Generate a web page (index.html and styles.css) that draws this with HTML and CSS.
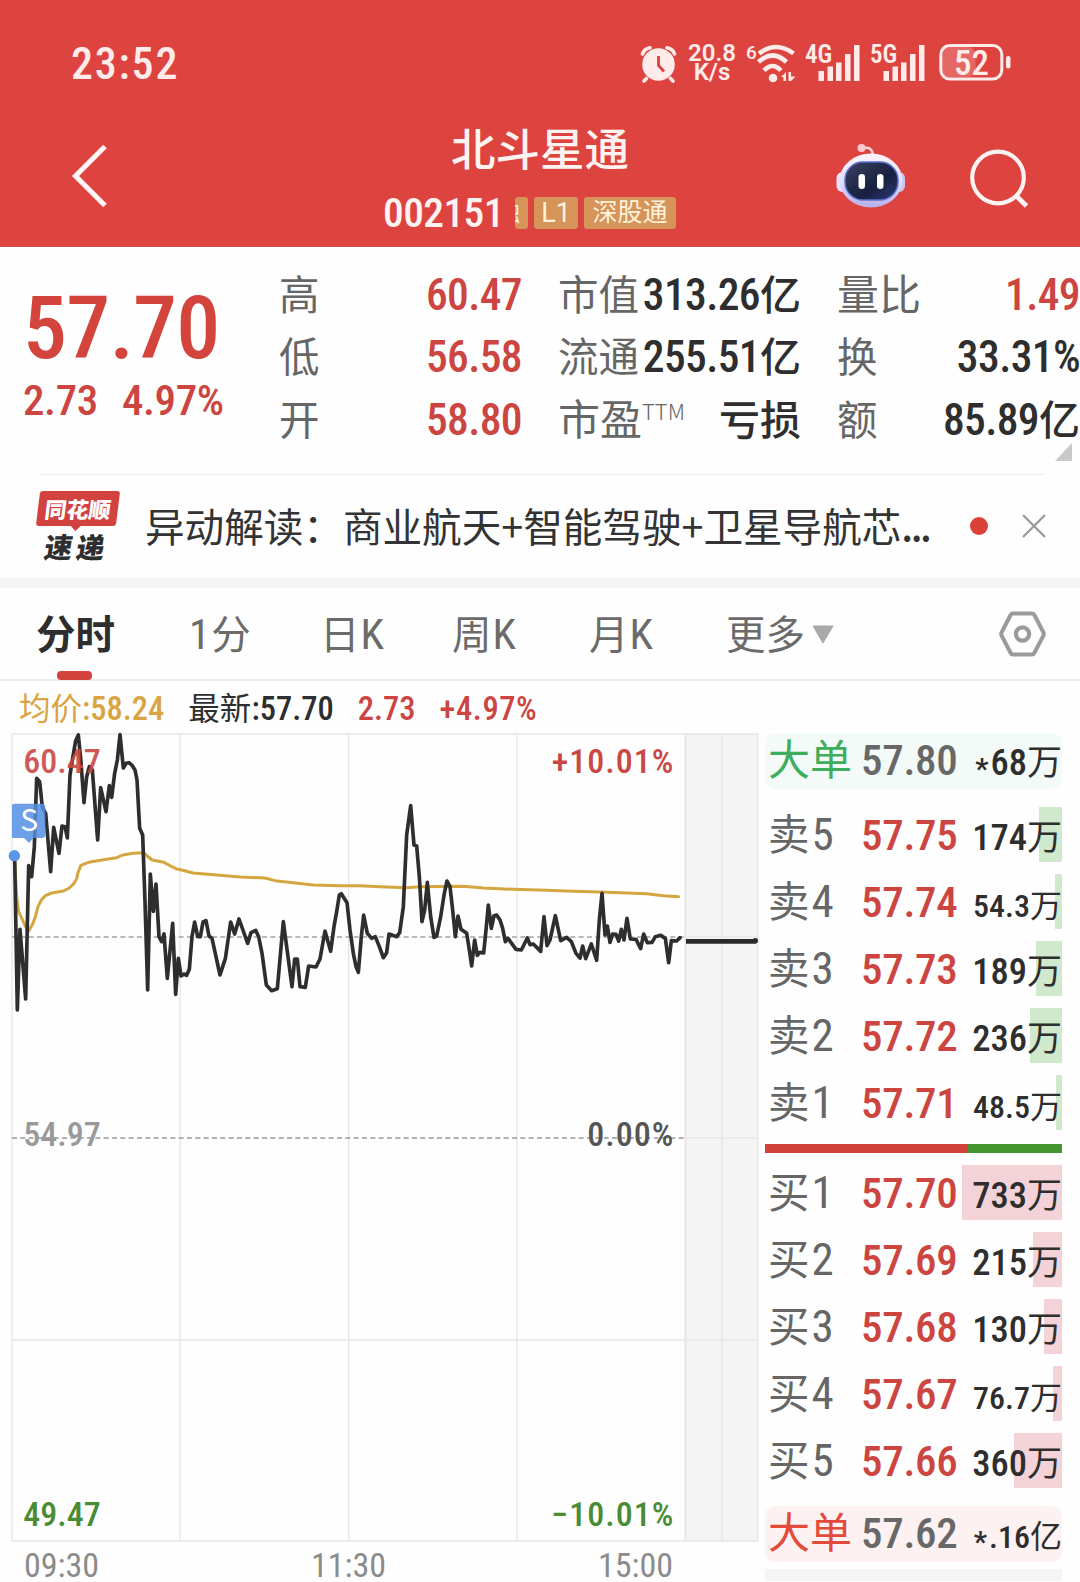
FILE: index.html
```html
<!DOCTYPE html>
<html lang="zh-CN">
<head>
<meta charset="utf-8">
<title>北斗星通 002151</title>
<link rel="stylesheet" href="styles.css">
</head>
<body>
<header class="header">
  <div class="status">
    <span class="clock">23:52</span>
    <div class="status-icons">
      <svg class="ic-alarm" width="37" height="38" viewBox="0 0 37 38"><g fill="none" stroke="#ffecea" stroke-width="3.6" stroke-linecap="round"><path d="M2.5 9Q4 4 10 2.8M34.500 9Q33 4 27 2.800M6.500 33.500L4 36M30.500 33.500L33 36"/></g><circle cx="18.500" cy="19.500" r="16.300" fill="#ffecea"/><path d="M18.500 11v9.500l5.500 6" fill="none" stroke="#dd433f" stroke-width="2.800"/></svg>
      <span class="speed"><span>20.8</span><span>K/s</span></span>
      <svg class="ic-wifi" width="50" height="40" viewBox="0 0 50 40"><g fill="none" stroke="#ffecea" stroke-width="4.600"><path d="M13 9.500Q30 -3.500 47.500 9.500"/><path d="M12.500 18Q26.500 5 40.500 18"/><path d="M18 26.500Q26.500 17.500 35 26.500"/></g><circle cx="27" cy="34" r="4.300" fill="#ffecea"/><path d="M35 33l5-5v9h-2.600v-4zM42.500 28v9h2.500l4.500-4.500h-4.400V28z" fill="#ffecea"/><text x="0" y="15" class="tiny">6</text></svg>
      <svg class="ic-sig" width="56" height="40" viewBox="0 0 56 40"><text x="0" y="18.500" class="net">4G</text><path d="M13.500 27h5.500v10h-5.500zM22.500 22.500h5.500v14.500h-5.500zM31 18.500h5.500v18.500h-5.500zM40 10h5.500v27h-5.500zM49 1h5.500v36h-5.500z" fill="#ffecea"/></svg>
      <svg class="ic-sig" width="56" height="40" viewBox="0 0 56 40"><text x="0" y="18.500" class="net">5G</text><path d="M13.500 27h5.500v10h-5.500zM22.500 22.500h5.500v14.500h-5.500zM31 18.500h5.500v18.500h-5.500zM40 10h5.500v27h-5.500zM49 1h5.500v36h-5.500z" fill="#ffecea"/></svg>
      <svg width="74" height="38" viewBox="0 0 74 38"><rect x="2.500" y="3" width="34" height="30" rx="8" fill="#e46965"/><rect x="1.800" y="1.500" width="61" height="33.500" rx="9" fill="none" stroke="#ffecea" stroke-width="3"/><rect x="67" y="12" width="4.500" height="12.500" rx="2.200" fill="#ffecea"/><text x="15" y="30.500" class="batt">52</text></svg>
    </div>
  </div>
  <div class="titlebar">
    <svg class="back" width="40" height="64" viewBox="0 0 40 64"><path d="M34 2.500L4.500 32L34 61.500" fill="none" stroke="#fff6f4" stroke-width="5"/></svg>
    <div class="name">
      <h1>北斗星通</h1>
      <div class="code"><span class="code-num">002151</span><span class="tag tag-cut"><i>融</i></span><span class="tag tag-l1">L1</span><span class="tag">深股通</span></div>
    </div>
    <div class="actions">
      <svg width="70" height="66" viewBox="0 0 70 66">
        <defs><linearGradient id="shell" x1="0" y1="0" x2="0" y2="1"><stop offset="0" stop-color="#fff5fa"/><stop offset=".55" stop-color="#dcdcfa"/><stop offset="1" stop-color="#b9aeea"/></linearGradient><linearGradient id="face" x1="0" y1="0" x2="1" y2="1"><stop offset="0" stop-color="#3a4163"/><stop offset=".6" stop-color="#18203f"/><stop offset="1" stop-color="#2a3a78"/></linearGradient></defs>
        <path d="M27 5Q36 3 37 12" fill="none" stroke="#fbd3dc" stroke-width="2.500"/><circle cx="25.500" cy="5" r="4" fill="#fbc9d0"/>
        <rect x="0.500" y="29" width="12" height="20" rx="6" fill="#e9e2fb"/><rect x="57" y="29" width="12" height="20" rx="6" fill="#c9c2f2"/>
        <ellipse cx="35" cy="37.500" rx="31.500" ry="27" fill="url(#shell)"/>
        <rect x="9" y="19" width="53" height="38" rx="18" fill="url(#face)" stroke="#5c6fd0" stroke-width="1.500"/>
        <rect x="22.500" y="31" width="6.500" height="15" rx="3.200" fill="#fff"/><rect x="41" y="31" width="6.500" height="15" rx="3.200" fill="#fff"/>
      </svg>
      <svg width="60" height="60" viewBox="0 0 60 60"><g fill="none" stroke="#fff3f1"><circle cx="28" cy="28.500" r="25.800" stroke-width="4.200"/><path d="M46.500 47L56.500 57" stroke-width="4.800"/></g></svg>
    </div>
  </div>
</header>

<section class="quote">
  <div class="price">
    <div class="last">57.70</div>
    <div class="delta"><span>2.73</span><span>4.97%</span></div>
  </div>
  <dl class="stats">
    <div class="col">
      <div><dt>高</dt><dd class="up">60.47</dd></div>
      <div><dt>低</dt><dd class="up">56.58</dd></div>
      <div><dt>开</dt><dd class="up">58.80</dd></div>
    </div>
    <div class="col">
      <div><dt>市值</dt><dd>313.26<b>亿</b></dd></div>
      <div><dt>流通</dt><dd>255.51<b>亿</b></dd></div>
      <div><dt class="pe">市盈<sup>TTM</sup></dt><dd><b>亏损</b></dd></div>
    </div>
    <div class="col">
      <div><dt class="pe">量比</dt><dd class="up">1.49</dd></div>
      <div><dt>换</dt><dd>33.31%</dd></div>
      <div><dt>额</dt><dd>85.89<b>亿</b></dd></div>
    </div>
  </dl>
  <i class="corner"></i>
</section>

<section class="news">
  <div class="logo"><span class="logo-top">同花顺</span><span class="logo-bottom">速递</span></div>
  <p>异动解读：商业航天+智能驾驶+卫星导航芯<span class="dots">...</span></p>
  <i class="dot"></i>
  <svg width="24" height="24" viewBox="0 0 24 24"><path d="M1 1L23 23M23 1L1 23" stroke="#9d9d9d" stroke-width="2.400"/></svg>
</section>

<nav class="tabs">
  <span class="on">分时</span>
  <span><i>1</i>分</span>
  <span>日<i>K</i></span>
  <span>周<i>K</i></span>
  <span>月<i>K</i></span>
  <span class="more">更多<svg width="22" height="19" viewBox="0 0 22 19"><path d="M1 1h20L11 18z" fill="#a9a9a9" stroke="#a9a9a9" stroke-width="1" stroke-linejoin="round"/></svg></span>
  <svg class="hex" width="47" height="46" viewBox="0 0 47 46"><path d="M14 2.500H33Q34.500 2.500 35.300 3.800L44.500 21.500Q45 23 44.500 24.500L35.300 42Q34.500 43.500 33 43.500H14Q12.500 43.500 11.700 42L2.500 24.500Q2 23 2.500 21.500L11.700 3.800Q12.500 2.500 14 2.500Z" fill="none" stroke="#9b9b9b" stroke-width="4"/><circle cx="23.500" cy="23" r="6.600" fill="none" stroke="#9b9b9b" stroke-width="4.200"/></svg>
</nav>

<div class="legend"><span class="avg"><b>均价</b>:58.24</span><span class="now"><b>最新</b>:57.70</span><span class="up">2.73</span><span class="up">+4.97%</span></div>

<main class="board">
  <div class="chart">
    <svg class="plot" width="760" height="809" viewBox="0 39 2280 2427">
      <rect x="2058" y="42" width="216" height="2421" fill="#f4f4f4"/>
      <g fill="none" stroke="#e6e6e6" stroke-width="4">
        <path d="M36 2463V42H2274V2463Z"/>
        <path d="M540 42V2463M1046 42V2463M1551 42V2463M2166 42V2463M36 1860H2274M2058 651H2274M2058 1254H2274"/>
        <path d="M2056 42V2463" stroke-width="6"/>
      </g>
      <text x="2023" y="160" class="lbl red pct" text-anchor="end">+10.01%</text>
      <g fill="none" stroke-dasharray="15 10">
        <path d="M36 651H2056" stroke="#a3a59b" stroke-width="4"/>
        <path d="M36 1254H2056" stroke="#999" stroke-width="4"/>
      </g>
      <path d="M43 410L50 530L56 575L70 605L84 636L98 612L106 590L114 560L124 540L136 527L155 519L190 513L208 504L222 490L230 476L234 458L242 437L255 431L270 426L320 418L350 413L368 405L400 400L430 398L442 408L456 420L492 427L512 438L528 446L545 450L580 459L650 465L720 471L795 474L825 482L880 488L940 495L1020 497L1080 497L1140 500L1220 503L1260 500L1390 499L1450 504L1540 508L1640 511L1720 514L1800 516L1880 519L1940 521L1990 527L2036 530" fill="none" stroke="#d5a640" stroke-width="9" stroke-linecap="round" stroke-linejoin="round"/>
      <path d="M44 412L52 870L60 628L77 837L86 437L95 470L103 380L110 175L119 185L127 262L137 280L152 455L161 322L177 400L186 318L195 320L202 354L210 165L218 115L227 62L235 45L242 115L252 248L260 170L268 140L277 150L293 360L302 203L318 275L328 197L335 232L344 160L352 120L360 44L370 144L378 130L387 128L397 137L405 150L411 180L419 325L428 345L435 545L443 810L451 462L460 574L468 492L477 650L485 665L492 642L502 775L518 610L527 823L535 715L543 768L552 762L560 766L568 748L576 650L584 606L593 650L601 650L609 606L618 602L627 648L636 655L660 765L676 716L692 606L704 642L717 597L743 670L753 638L767 631L776 650L786 700L799 795L815 812L832 806L850 605L876 800L884 717L892 717L900 800L916 802L926 738L948 741L960 717L975 633L992 694L1002 620L1010 575L1018 525L1024 521L1041 548L1050 630L1060 700L1068 740L1075 757L1084 650L1091 585L1102 640L1115 655L1126 650L1138 680L1150 713L1160 698L1167 642L1190 650L1199 638L1210 560L1220 345L1232 257L1242 375L1250 378L1258 470L1266 605L1274 570L1282 487L1292 590L1302 652L1310 648L1322 590L1333 520L1341 483L1350 500L1358 570L1366 650L1374 588L1383 628L1400 640L1408 690L1415 738L1424 660L1432 706L1440 697L1451 699L1458 630L1465 555L1474 625L1482 587L1490 585L1500 600L1508 625L1516 665L1524 655L1548 688L1564 690L1582 654L1590 674L1600 672L1622 694L1632 590L1641 677L1650 660L1666 587L1682 662L1700 652L1714 665L1728 700L1740 714L1748 678L1757 716L1774 672L1790 721L1798 600L1806 520L1815 645L1822 618L1830 667L1838 642L1848 643L1856 663L1864 628L1872 660L1881 595L1891 657L1908 658L1922 686L1931 642L1942 668L1956 667L1966 650L1982 646L1996 655L2006 728L2014 662L2030 663L2040 653" fill="none" stroke="#2e2e2e" stroke-width="11" stroke-linecap="round" stroke-linejoin="round"/>
      <path d="M2058 664H2268" stroke="#2a2a2a" stroke-width="14"/><circle cx="2266" cy="662" r="8" fill="#2a2a2a"/>
      <text x="70" y="160" class="lbl red" opacity=".9">60.47</text>
      <text x="70" y="1277" class="lbl grey">54.97</text>
      <text x="2023" y="1277" class="lbl dark pct" text-anchor="end">0.00%</text>
      <text x="70" y="2417" class="lbl green">49.47</text>
      <text x="2023" y="2417" class="lbl green pct" text-anchor="end">−10.01%</text>
      <path d="M44 251H126Q136 251 136 261V345Q136 354 126 354H100L87 369L72 354H36V259Q36 251 44 251Z" fill="#538fe3" opacity=".85"/>
      <text x="61" y="332" class="mark">S</text>
      <circle cx="43" cy="407" r="17" fill="#5b95e6"/>
    </svg>
    <div class="axis"><span>09:30</span><span>11:30</span><span>15:00</span></div>
  </div>

  <div class="book">
    <div class="big sell"><span class="side">大单</span><span class="px">57.80</span><span class="vol"><em>*</em>68<b>万</b></span></div>
    <div class="rows asks">
      <div class="row"><i class="bar" style="width:23px"></i><span class="side">卖<u>5</u></span><span class="px">57.75</span><span class="vol">174<b>万</b></span></div>
      <div class="row"><i class="bar" style="width:7px"></i><span class="side">卖<u>4</u></span><span class="px">57.74</span><span class="vol sm">54.3<b>万</b></span></div>
      <div class="row"><i class="bar" style="width:26px"></i><span class="side">卖<u>3</u></span><span class="px">57.73</span><span class="vol">189<b>万</b></span></div>
      <div class="row"><i class="bar" style="width:32px"></i><span class="side">卖<u>2</u></span><span class="px">57.72</span><span class="vol">236<b>万</b></span></div>
      <div class="row"><i class="bar" style="width:6px"></i><span class="side">卖<u>1</u></span><span class="px">57.71</span><span class="vol sm">48.5<b>万</b></span></div>
    </div>
    <div class="ratio"><i style="width:203px"></i></div>
    <div class="rows bids">
      <div class="row"><i class="bar" style="width:100px"></i><span class="side">买<u>1</u></span><span class="px">57.70</span><span class="vol">733<b>万</b></span></div>
      <div class="row"><i class="bar" style="width:29px"></i><span class="side">买<u>2</u></span><span class="px">57.69</span><span class="vol">215<b>万</b></span></div>
      <div class="row"><i class="bar" style="width:18px"></i><span class="side">买<u>3</u></span><span class="px">57.68</span><span class="vol">130<b>万</b></span></div>
      <div class="row"><i class="bar" style="width:9px"></i><span class="side">买<u>4</u></span><span class="px">57.67</span><span class="vol sm">76.7<b>万</b></span></div>
      <div class="row"><i class="bar" style="width:48px"></i><span class="side">买<u>5</u></span><span class="px">57.66</span><span class="vol">360<b>万</b></span></div>
    </div>
    <div class="big buy"><span class="side">大单</span><span class="px">57.62</span><span class="vol sm"><em>*</em>.16<b>亿</b></span></div>
    <div class="next"></div>
  </div>
</main>
</body>
</html>
```
FILE: styles.css
```css
* { box-sizing: border-box; margin: 0; padding: 0; }
html, body { width: 1080px; height: 1582px; overflow: hidden; }
body {
  background: #fefefe;
  color: #2e2e2e;
  font-family: Roboto, "Noto Sans CJK SC", sans-serif;
  font-stretch: 85%;
  white-space: nowrap;
}
i, em { font-style: normal; }
u { text-decoration: none; line-height: 0; }
b { font-family: "Noto Sans CJK SC", sans-serif; line-height: 0; }
svg { display: block; flex: none; overflow: visible; }

/* header */
.header { height: 247px; background: #dd433f; border-bottom: 1px solid #c9514c; color: #fff3f1; }
.status { display: flex; justify-content: space-between; height: 127px; padding: 44px 67px 0 71px; }
.clock { font-size: 44px; line-height: 40px; font-weight: 500; letter-spacing: 1.8px; color: #ffecea; }
.status-icons { display: flex; align-items: flex-start; }
.ic-alarm { margin: 1px 11px 0 0; }
.speed { display: flex; flex-direction: column; align-items: center; width: 48px; margin-right: 10px; font-size: 24px; line-height: 19px; font-weight: 600; font-stretch: 100%; color: #ffecea; }
.ic-wifi { margin-right: 9px; }
.ic-sig { margin-right: 9px; }
.ic-sig + svg:last-child { margin-left: 4px; }
.tiny { font: 500 19px Roboto; fill: #ffecea; }
.net { font-size: 25px; font-weight: 600; fill: #ffecea; }
.batt { font-size: 35px; font-weight: 500; fill: #ffecea; }
.titlebar { display: flex; align-items: flex-start; padding-left: 71px; }
.back { margin-top: 17px; }
.name { width: 294px; margin-left: 272px; }
h1 { padding-left: 20px; font: 500 44.5px/40px "Noto Sans CJK SC", sans-serif; text-align: center; }
.code { display: flex; align-items: center; height: 32px; margin-top: 30px; }
.code-num { width: 132px; font-size: 41.5px; line-height: 32px; font-weight: 500; letter-spacing: -0.6px; }
.tag { width: 92px; height: 32px; border-radius: 3px; background: #d6935a; color: #fff3dc; font-size: 25px; line-height: 32px; text-align: center; overflow: hidden; }
.tag-cut { width: 13px; margin-right: 6px; }
.tag-cut i { display: block; width: 25px; margin-left: -20px; }
.tag-l1 { width: 44px; margin-right: 6px; font-size: 27px; font-stretch: 100%; }
.actions { display: flex; margin-left: 159px; padding-top: 16px; gap: 64px; }
.actions svg + svg { margin-top: 6px; }

/* quote */
.quote { position: relative; display: flex; height: 228px; padding-top: 18px; }
.quote::after { content: ""; position: absolute; left: 39px; right: 36px; bottom: 0; height: 1px; background: #ededed; }
.up { color: #cc4541; }
.price { width: 280px; padding: 29px 0 0 23px; color: #d3443c; }
.last { font-size: 88px; line-height: 68px; font-weight: 500; letter-spacing: -0.8px; }
.delta { display: flex; gap: 24px; margin-top: 18px; font-size: 43px; line-height: 40px; font-weight: 500; letter-spacing: -0.4px; color: #cc4541; }
.stats { display: flex; gap: 36px; }
.col { width: 243px; }
.col > div { display: flex; justify-content: space-between; align-items: baseline; height: 62.3px; line-height: 62px; }
dt { font-size: 40.5px; color: #666; }
.pe { font-size: 42px; }
dd { font-size: 43.5px; font-weight: 500; letter-spacing: -0.6px; }
dd b { font-size: 41px; font-weight: 500; letter-spacing: 0; }
sup { font: 300 22px/0 "Noto Sans CJK SC", sans-serif; vertical-align: 15px; }
.corner { position: absolute; left: 1055px; top: 196px; border-style: solid; border-width: 0 0 18px 17px; border-color: transparent transparent #c9c9c9; }

/* news strip */
.news { display: flex; align-items: center; height: 103px; padding: 0 0 2px 35px; }
.logo { display: flex; flex-direction: column; align-items: center; width: 85px; margin-right: 25px; font-family: "Noto Sans CJK SC", sans-serif; font-weight: 900; }
.logo-top { position: relative; width: 80px; height: 35px; border-radius: 3px; background: #d2423f; color: #fff; font-size: 22px; line-height: 35px; text-align: center; transform: skewX(-7deg); }
.logo-top::after { content: ""; position: absolute; left: 34px; top: 34px; border: 6px solid transparent; border-top-color: #d2423f; }
.logo-bottom { margin-top: 6px; height: 28px; font-size: 28px; line-height: 28px; letter-spacing: 4px; transform: skewX(-9deg); }
.news p { width: 805px; padding-bottom: 2px; font: 400 39.6px/60px "Noto Sans CJK SC", sans-serif; color: #333; }
.dots { letter-spacing: -2.5px; font-weight: 500; }
.dot { width: 18px; height: 18px; margin: 0 34px 0 20px; border-radius: 50%; background: #db4136; }

/* period tabs */
.tabs { position: relative; display: grid; grid-template-columns: 152px 132px 132px 137px 137px 273px auto; align-items: center; height: 103px; padding-left: 36px; border-top: 10px solid #f4f4f4; border-bottom: 2px solid #ececec; font-size: 39.5px; line-height: 60px; color: #6b6b6b; }
.tabs > span { padding-top: 5px; }
.tabs i { font-size: 43px; line-height: 0; margin: 0 1px; }
.tabs .on { font-weight: 700; color: #2e2e2e; }
.tabs::after { content: ""; position: absolute; left: 57px; bottom: -1px; width: 35px; height: 9px; border-radius: 4px; background: #d3443f; }
.more { display: flex; align-items: center; gap: 7px; }
.more svg { margin-top: -4px; }

/* legend */
.legend { display: flex; align-items: baseline; height: 52px; padding: 5px 0 0 19px; font-size: 32.5px; line-height: 47px; font-weight: 500; }
.legend b { font-size: 31.5px; font-weight: 400; }
.legend span { margin-right: 24px; }
.legend span:last-child { letter-spacing: 0.6px; }
.avg { color: #d9a441; }

/* chart */
.board { display: flex; }
.chart { width: 765px; }
.lbl { font-size: 102px; font-weight: 500; }
.pct { letter-spacing: 3px; }
.red { fill: #c94844; }
.grey { fill: #999; }
.dark { fill: #555; }
.green { fill: #4a8c35; }
.mark { font: 400 90px "Noto Sans CJK SC"; fill: #fff; }
.axis { display: flex; justify-content: space-between; width: 673px; padding-left: 24px; font-size: 34px; line-height: 46px; color: #8b8b8b; }

/* order book */
.book { width: 297px; }
.big, .row { position: relative; display: flex; align-items: baseline; padding: 4px 0 0 3px; }
.big { height: 56px; line-height: 46px; border-radius: 10px; }
.sell { background: #f4faf7; }
.buy { background: #fdf1f1; margin-top: 12px; }
.side { width: 93px; font-size: 41.5px; color: #666; }
.side u { font-size: 45px; margin-left: 2px; }
.big .side { font-size: 42px; }
.sell .side { color: #3fae5c; }
.buy .side { color: #e24a3b; }
.px { font-size: 43px; font-weight: 500; letter-spacing: -0.3px; color: #cc4541; }
.big .px { color: #686868; }
.vol { position: relative; margin-left: auto; font-size: 36.5px; font-weight: 500; }
.vol b { font-size: 35px; font-weight: 400; }
.vol.sm { font-size: 32px; }
.vol.sm b { font-size: 32px; }
.vol em { margin-right: 2px; font-size: 30px; line-height: 0; vertical-align: -4px; }
.rows { line-height: 60px; }
.asks { margin-top: 12px; }
.row { height: 67px; }
.bar { position: absolute; right: 0; top: 6px; height: 55px; }
.asks .bar { background: #d0e8cc; }
.bids .bar { background: #f3d3d7; }
.ratio { height: 9px; margin: 8px 0 6px; background: #45942f; }
.ratio i { display: block; height: 9px; background: #d1423d; }
.next { height: 12px; margin-top: 7px; background: #f4f4f4; }
```
